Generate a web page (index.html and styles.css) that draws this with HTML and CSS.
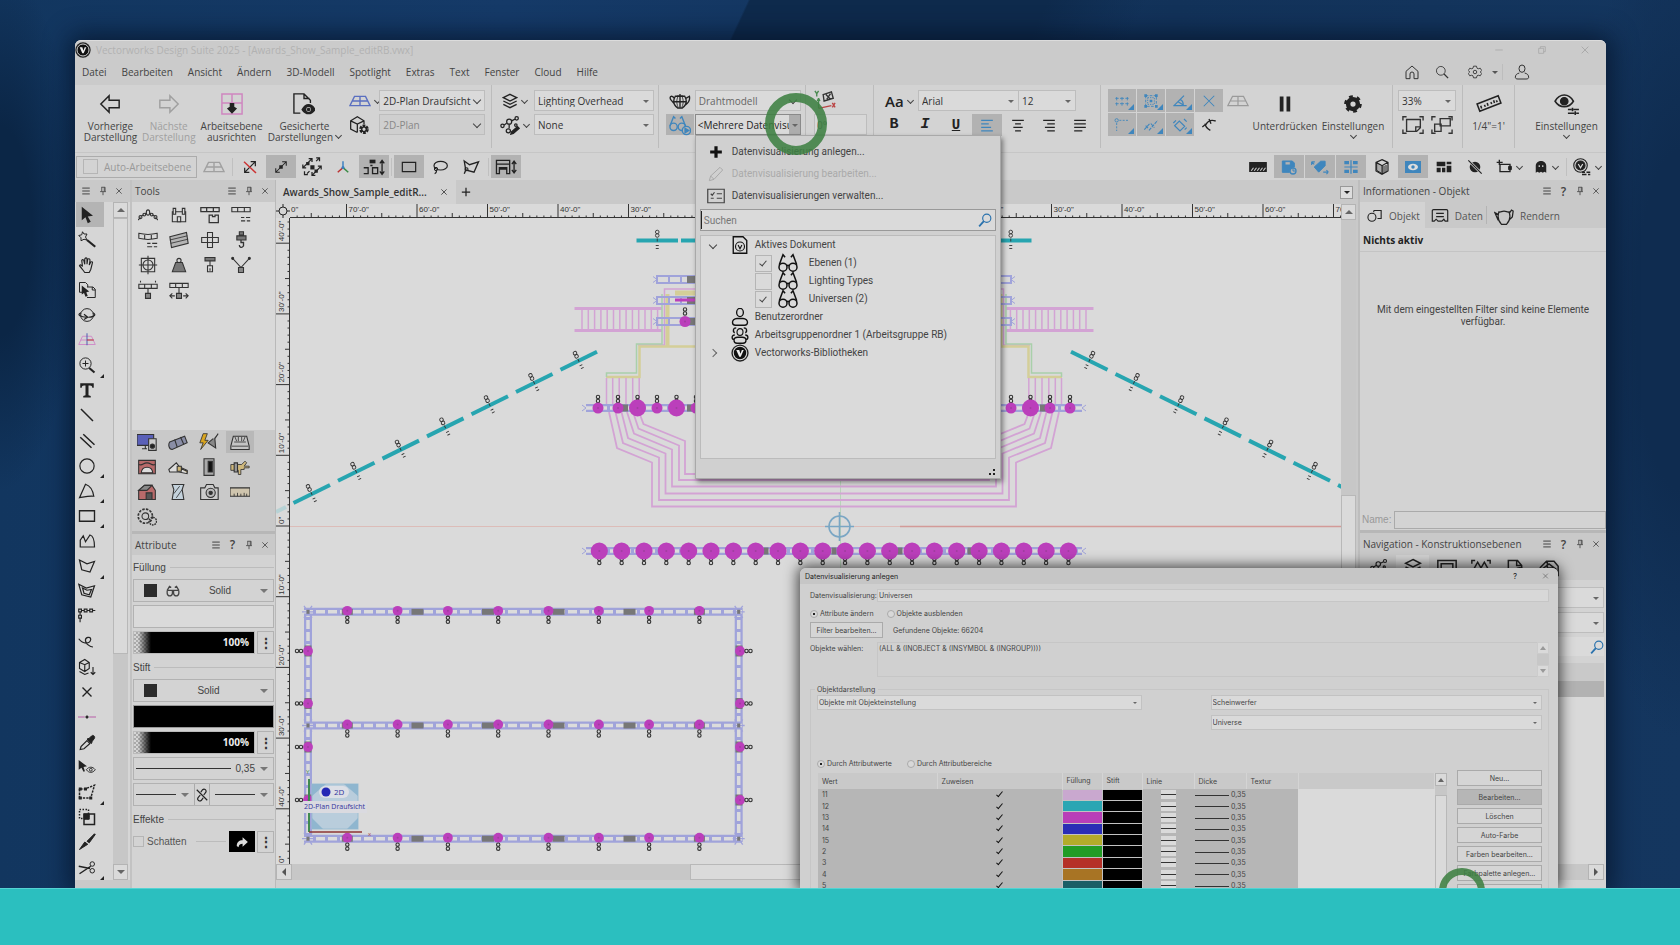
FILE: index.html
```html
<!DOCTYPE html>
<html lang="de">
<head>
<meta charset="utf-8">
<title>Vectorworks Design Suite 2025</title>
<link rel="stylesheet" href="styles.css">
</head>
<body>
<svg class="defs" aria-hidden="true">
<symbol id="logo" viewBox="0 0 24 24"><circle cx="12" cy="12" r="11.5" fill="#222" stroke="none"/><circle cx="12" cy="12" r="9" fill="#111" stroke="#ddd" stroke-width="1.4"/><path d="M7 8h4l1.6 5L14.500 8H17l-4 9h-2z" fill="#eee" stroke="none"/></symbol>
<symbol id="menu" viewBox="0 0 24 24"><path d="M3 5h18M3 12h18M3 19h18" stroke-width="2.400"/></symbol>
<symbol id="pin" viewBox="0 0 24 24"><path d="M8 3h9M9 3v10M15 3v10M17 3v10M5 13.500h14M12 14v8" stroke-width="2"/></symbol>
<symbol id="x" viewBox="0 0 24 24"><path d="M4 4l16 16M20 4L4 20" stroke-width="2.400"/></symbol>
<symbol id="min" viewBox="0 0 24 24"><path d="M3 12h18"/></symbol>
<symbol id="restore" viewBox="0 0 24 24"><path d="M4 8h12v12H4zM8 8V4h12v12h-4"/></symbol>
<symbol id="home" viewBox="0 0 24 24"><path d="M3 11L12 3l9 8v11h-6v-7a3 3 0 0 0-6 0v7H3z"/></symbol>
<symbol id="search" viewBox="0 0 24 24"><circle cx="10" cy="10" r="7.500"/><path d="M15.500 15.500l7 7" stroke-width="2.200"/></symbol>
<symbol id="find" viewBox="0 0 24 24"><circle cx="15" cy="9" r="7"/><path d="M10 14l-8 9" stroke-width="3"/></symbol>
<symbol id="gearline" viewBox="0 0 24 24"><path d="M9.500 2h5l1 3.500 2 1 3.500-1 2.500 4-2.500 2.500 2.500 2.500-2.500 4-3.500-1-2 1-1 3.500h-5l-1-3.500-2-1-3.500 1-2.500-4L3 12 .500 9.500 3 5.500l3.500 1 2-1z"/><circle cx="12" cy="12" r="3"/></symbol>
<symbol id="user" viewBox="0 0 24 24"><ellipse cx="12" cy="7" rx="4.500" ry="5.500"/><path d="M8 13.500c-4 1-6 3-6 6.500 0 2 2 2.500 4 2.500h12c2 0 4-.500 4-2.500 0-3.500-2-5.500-6-6.500"/></symbol>
<symbol id="left" viewBox="0 0 24 24"><path d="M2 12L11 3v5h11v8H11v5z" stroke-width="1.600"/></symbol>
<symbol id="right" viewBox="0 0 24 24"><path d="M22 12L13 3v5H2v8h11v5z" stroke-width="1.600"/></symbol>
<symbol id="align" viewBox="0 0 24 24"><path d="M1 1h22v22H1zM12 1v10M1 11h22" stroke="#cf86c0" stroke-width="1.600"/><path d="M9.500 11h5v4l3 2-5.500 5.500L6.500 17l3-2z" fill="#222" stroke="none"/></symbol>
<symbol id="saved" viewBox="0 0 24 24"><path d="M8 22H1V1h11l7 7v3M12 1v5h6" /><path d="M10 18c4-7 10-7 14 0-4 6-10 6-14 0z" fill="#222"/><circle cx="17" cy="18" r="2.600" fill="#ccc" stroke="none"/><circle cx="17" cy="18" r="1.200" fill="#222"/></symbol>
<symbol id="plane" viewBox="0 0 24 24"><path d="M6 7h12l5 10H1zM3.500 12h17M12 7v10"/></symbol>
<symbol id="planepink" viewBox="0 0 24 24"><path d="M6 7h12l5 11H1zM3.500 12h17" stroke="#d08cc8"/><path d="M12 3v16" stroke="#4a5ab0"/><path d="M12 12h9" stroke="#b33"/></symbol>
<symbol id="boxgear" viewBox="0 0 24 24"><path d="M10 21L2 17V7l8-5 8 5v4M2 7l8 4 8-4M10 11v10"/><circle cx="18" cy="17" r="4" stroke-width="3.500" stroke-dasharray="3 1.200"/><circle cx="18" cy="17" r="2.800" /></symbol>
<symbol id="layers" viewBox="0 0 24 24"><path d="M12 2l10 5-10 5L2 7zM2 12l10 5 10-5M2 17l10 5 10-5" stroke-width="2"/></symbol>
<symbol id="classes" viewBox="0 0 24 24"><circle cx="3" cy="13" r="2"/><circle cx="11" cy="8" r="3"/><circle cx="20" cy="4" r="2"/><circle cx="10" cy="19" r="2.500"/><circle cx="19" cy="12" r="1.500"/><path d="M5 12l3-2M14 7l4-2M11 11v5"/><path d="M14 20l7-6 2 2-7 6-3 1z" fill="#222"/></symbol>
<symbol id="teapot" viewBox="0 0 28 24"><path d="M8 6c-4 7-1 12 3 15h6c4-3 7-8 3-15zM7 9C4 4 0 6 2 10l5 6M21 9l5-3c1 5-2 9-5 11M10 5.500h8M14 3v18M7 13h14" stroke-width="1.700"/><path d="M11 7c-2 5-1 10 1 14M17 7c2 5 1 10-1 14" stroke-width="1"/></symbol>
<symbol id="pot" viewBox="0 0 24 24"><path d="M6 7c-3 8 1 13 3 15h6c2-2 6-7 3-15-2 1-3-1-6-1S8 8 6 7zM5 10L1 8l4 9M18 9l3-4 2 1-1 7-3 3"/></symbol>
<symbol id="glassplay" viewBox="0 0 24 24"><circle cx="5" cy="14" r="4"/><circle cx="14" cy="14" r="4"/><path d="M1 13L5 3l2 2M18 13L14 3l-2 2"/><circle cx="19" cy="18" r="4.500" fill="#b3b3b3"/><path d="M17.500 15.500l4 2.500-4 2.500z" fill="currentColor"/></symbol>
<symbol id="glass" viewBox="0 0 24 24"><circle cx="6" cy="17" r="4.800" stroke-width="1.800"/><circle cx="18" cy="17" r="4.800" stroke-width="1.800"/><path d="M10.500 15.500c1-1 2-1 3 0M1.500 14L6 2l2.500 3M22.500 14L18 2l-2.500 3" stroke-width="1.800"/></symbol>
<symbol id="glasssm" viewBox="0 0 24 24"><path d="M2 11h20M2 11l4-7 3 2M22 11l-4-7-3 2M2 11v5c1 6 8 6 9 0v-4M13 12v4c1 6 8 6 9 0v-5" stroke-width="2.200"/></symbol>
<symbol id="axes" viewBox="0 0 24 24"><path d="M5 10v10M5 9l-1.500 3M5 9l1.500 3" stroke="#4a8a50"/><path d="M5 20l14-3" stroke="#b44"/><path d="M10 5l9-3 2 7-10 3zM13 5l5 5M18 4l-4 6" stroke="#333"/><path d="M1 1l2 3 2-3M3 4v3" stroke="#4a8a50"/><path d="M20 14l3 5M23 14l-3 5" stroke="#b44"/></symbol>
<symbol id="pause" viewBox="0 0 24 24"><path d="M5 2h5v20H5zM14 2h5v20h-5z" fill="#222" stroke="none"/></symbol>
<symbol id="gear" viewBox="0 0 24 24"><circle cx="12" cy="12" r="6.500" stroke="#222" stroke-width="6"/><circle cx="12" cy="12" r="10" stroke="#222" stroke-width="3.500" stroke-dasharray="5 5.400"/></symbol>
<symbol id="fit" viewBox="0 0 24 24"><path d="M1 7V3h4M19 3h4v4M1 17v4h4M19 21h4v-4" /><path d="M5 6h15v9l-4 4H5zM20 14h-5v5"/></symbol>
<symbol id="fit2" viewBox="0 0 24 24"><path d="M1 7V3h4M19 3h4v4M1 17v4h4M19 21h4v-4"/><path d="M10 5h11v8H10zM4 11h7v8H4z"/></symbol>
<symbol id="ruler" viewBox="0 0 28 24"><path d="M1 12L24 3l3 8L4 20zM6 17l-1-3M10 15l-1-2M13 14l-1-3M17 12l-1-2M20 11l-1-3M23 10l-1-2" stroke-width="1.700"/></symbol>
<symbol id="eyeset" viewBox="0 0 28 24"><path d="M1 9c5-9 15-9 20 0-5 8-15 8-20 0z" stroke-width="1.700"/><circle cx="11" cy="9" r="4" fill="#222"/><path d="M15 18h4M21 18h6M15 22h7M24 22h3M20 16v4M23 20v4" stroke-width="1.700"/></symbol>
<symbol id="grid" viewBox="0 0 24 24"><path d="M4 6v5M2 8h5M12 6v5M9 8h6M20 6v5M17 8h5M4 14v5M2 16h5M12 14v5M9 16h6M20 14v5M17 16h5"/></symbol>
<symbol id="snapobj" viewBox="0 0 24 24"><path d="M4 4h16v16H4z" stroke-dasharray="4 2"/><path d="M7 7h10v10H7z" stroke-dasharray="2 1.500"/><path d="M2 2h4v4H2zM18 2h4v4h-4zM2 18h4v4H2zM18 18h4v4h-4zM10 10h4v4h-4z" fill="currentColor" stroke="none"/></symbol>
<symbol id="angle" viewBox="0 0 24 24"><path d="M2 19h20M3 19L18 4M12 10c4 1 5 5 5 9M9 13l8 5" stroke-width="1.800"/></symbol>
<symbol id="cross" viewBox="0 0 24 24"><path d="M3 3l18 18M21 3L3 21" stroke-width="1.800"/></symbol>
<symbol id="snappt" viewBox="0 0 24 24"><circle cx="4" cy="5" r="2.500"/><path d="M8 5h14M4 9v12" stroke-dasharray="3 2"/></symbol>
<symbol id="slashes" viewBox="0 0 24 24"><path d="M2 19L11 9M9 20L22 5M4 13l4 4M12 10l5 6" stroke-width="1.600" stroke-dasharray="5 1.500"/></symbol>
<symbol id="rot" viewBox="0 0 24 24"><path d="M4 13l7-7 8 8-7 7zM2 9l4-4M18 3l4 4M19 19l3-3" stroke-width="1.800"/></symbol>
<symbol id="arc" viewBox="0 0 24 24"><path d="M2 15l5-4M7 12c3-6 9-8 15-6M6 10c1 6 4 8 8 10M12 3l3 7" stroke-width="2"/></symbol>
<symbol id="al" viewBox="0 0 24 24"><path d="M2 4h20M2 10h13M2 16h17M2 22h20" stroke-width="2.400"/></symbol>
<symbol id="ac" viewBox="0 0 24 24"><path d="M2 4h20M7 10h10M4 16h16M7 22h10" stroke-width="2.400"/></symbol>
<symbol id="ar" viewBox="0 0 24 24"><path d="M2 4h20M9 10h13M5 16h17M9 22h13" stroke-width="2.400"/></symbol>
<symbol id="aj" viewBox="0 0 24 24"><path d="M2 4h20M2 10h20M2 16h20M2 22h14" stroke-width="2.400"/></symbol>
<symbol id="noscale" viewBox="0 0 24 24"><path d="M4 20L20 4M13 4h7v7M4 13v7h7" stroke="#222" stroke-width="1.800"/><path d="M3 4l18 17" stroke="#c33" stroke-width="2.200"/></symbol>
<symbol id="scale1" viewBox="0 0 24 24"><path d="M3 21L21 3M14 3h7v7M3 14v7h7" stroke-width="1.800"/><path d="M9 9h6v6H9z" fill="#222" stroke="none"/></symbol>
<symbol id="scale2" viewBox="0 0 24 24"><path d="M1 13L12 2M8 2h4v4M1 9v4h4M12 22L23 11M19 11h4v4M12 18v4h4M6 20l3-3M17 5l3-3M3 17v4h4M17 1h4v4" stroke-width="1.500"/><path d="M5 6h4v4H5zM15 15h4v4h-4zM10 10h5v5h-5z" fill="#222" stroke="none"/></symbol>
<symbol id="tri" viewBox="0 0 24 24"><path d="M12 13V2" stroke="#3a7fc0" stroke-width="2.500"/><path d="M12 13L3 21" stroke="#b33" stroke-width="2.500"/><path d="M12 13l9 8" stroke="#3a8a45" stroke-width="2.500"/><circle cx="12" cy="13" r="2.600" fill="#3a7fc0" stroke="none"/></symbol>
<symbol id="conn" viewBox="0 0 30 24"><path d="M9 2h8v5H9z" fill="#222" stroke="none"/><path d="M1 13h6v8H1M13 13h7v8h-7zM26 4v18M23 7l3-4 3 4M23 18l3 4 3-4M10 10h3" stroke-width="1.800"/></symbol>
<symbol id="rect" viewBox="0 0 24 24"><path d="M2 5h20v14H2z" stroke-width="1.800"/></symbol>
<symbol id="lasso" viewBox="0 0 24 24"><ellipse cx="13" cy="10" rx="10" ry="6.500" stroke-width="1.800"/><circle cx="6" cy="15" r="2.500"/><path d="M7 17c0 3-1 4-3 5" stroke-width="1.800"/></symbol>
<symbol id="poly" viewBox="0 0 24 24"><path d="M3 4l7 5 12-4-6 14-11-3zM5 16l-2 5" stroke-width="1.800"/><circle cx="6" cy="15" r="2"/></symbol>
<symbol id="table" viewBox="0 0 30 24"><path d="M2 3h18v5H2zM2 8v13h4v-8h10v8h4V8M6 15h10M26 5v14M23 8l3-4 3 4M23 16l3 4 3-4" stroke-width="1.800"/></symbol>
<symbol id="hatch" viewBox="0 0 24 24"><path d="M1 6h22v12H1z" fill="#222"/><path d="M3 17l3-4M7 17l3-4M11 17l3-4M15 17l3-4M19 17l3-4" stroke="#ccc" stroke-width="1.500"/></symbol>
<symbol id="disk" viewBox="0 0 24 24"><path d="M2 3h15l3 3v6a7 7 0 0 0-7 8H2z" fill="currentColor"/><path d="M6 4h8v5H6z" fill="#b3b3b3"/><circle cx="18" cy="18" r="4.500" fill="#b3b3b3" stroke-width="2"/><path d="M18 15v3h3"/></symbol>
<symbol id="tag" viewBox="0 0 28 24"><path d="M5 12L15 3h7v7L12 20z" fill="currentColor"/><path d="M1 4l4 4M1 4h5M1 4v5M27 20h-8M27 20l-3-3M27 20l-3 3" stroke-width="1.800"/></symbol>
<symbol id="split" viewBox="0 0 24 24"><path d="M2 3h7v5H2zM15 3h7v5h-7zM2 16h7v5H2zM15 16h7v5h-7z" fill="currentColor" stroke="none"/><path d="M12 2v20M2 12h20" stroke-width="1.800"/></symbol>
<symbol id="cube" viewBox="0 0 24 24"><path d="M12 1l9 4v13l-9 5-9-5V5zM3 5l9 5 9-5M12 10v13" stroke-width="1.800"/><path d="M4 6l8 4v12l-8-5z" fill="#aaa"/><path d="M15 10v11M18 9v11"/></symbol>
<symbol id="eyebox" viewBox="0 0 24 24"><path d="M0 3h24v18H0z" fill="currentColor" stroke="none"/><ellipse cx="12" cy="12" rx="7.500" ry="5" fill="#ddd" stroke="none"/><circle cx="12" cy="12" r="2.600" fill="currentColor" stroke="none"/></symbol>
<symbol id="blocks" viewBox="0 0 24 24"><path d="M1 4h13v7H1zM16 4h7v4h-7zM16 10h7v10h-7zM1 13h6v7H1zM9 13h5v7H9z" fill="#222" stroke="none"/></symbol>
<symbol id="dotslash" viewBox="0 0 24 24"><circle cx="12" cy="12" r="8" fill="#222" stroke="none"/><path d="M2 2l20 20" stroke="#d3d3d3" stroke-width="4"/><path d="M2 2l20 20" stroke-width="1.800"/></symbol>
<symbol id="crop" viewBox="0 0 24 24"><path d="M6 8h15v11H6zM1 5h9M5 1v8" stroke-width="2"/><path d="M19 11h4v5h-4z" fill="#222"/></symbol>
<symbol id="ghost" viewBox="0 0 24 24"><path d="M3 22V10c0-11 18-11 18 0v12l-3-2-3 2-3-2-3 2-3-2z" fill="#222" stroke="none"/><path d="M8 9h2v3H8zM14 9h2v3h-2z" fill="#ddd" stroke="none"/></symbol>
<symbol id="vset" viewBox="0 0 24 24"><circle cx="10" cy="10" r="9" stroke-width="1.500"/><circle cx="10" cy="10" r="6" fill="#222"/><path d="M7 8l3 5 3-5" stroke="#ddd" stroke-width="1.600"/><path d="M12 19h4M18 19h5M12 22h6M20 22h3" stroke-width="2"/></symbol>
<symbol id="plus" viewBox="0 0 24 24"><path d="M12 2v20M2 12h20" stroke="#111" stroke-width="5.500"/></symbol>
<symbol id="plusthin" viewBox="0 0 24 24"><path d="M12 2v20M2 12h20" stroke-width="3"/></symbol>
<symbol id="pencil" viewBox="0 0 24 24"><path d="M2 22l2-7L18 2l4 4L9 20zM4 15l5 5"/></symbol>
<symbol id="list" viewBox="0 0 24 24"><path d="M1 3h22v18H1z" stroke-width="1.600"/><path d="M5 9l2 2 3-4M13 9h7M5 15h4M13 15h7" stroke-width="1.600"/></symbol>
<symbol id="doc" viewBox="0 0 24 24"><path d="M3 1h13l5 5v17H3z" stroke-width="1.800"/><circle cx="12" cy="14" r="6"/><path d="M9.500 12l2.500 5 2.500-5" stroke-width="1.500"/></symbol>
<symbol id="person" viewBox="0 0 24 24"><ellipse cx="12" cy="6" rx="4.500" ry="5.500" stroke-width="1.800"/><path d="M8 14h8c4 0 6 3 6 5 0 3-1 4-4 4H6c-3 0-4-1-4-4 0-2 2-5 6-5z" stroke-width="1.800"/></symbol>
<symbol id="people" viewBox="0 0 24 24"><ellipse cx="12" cy="8" rx="4" ry="4.500"/><path d="M9 15h6c4 0 5 2 5 4 0 3-1 4-4 4H8c-3 0-4-1-4-4 0-2 1-4 5-4zM5 12C0 12 1 18 4 18M19 12c5 0 4 6 1 6M7 3C3 1 2 8 5 9M17 3c4-2 5 5 2 6" stroke-width="1.800"/></symbol>
<symbol id="obj" viewBox="0 0 26 24"><circle cx="8" cy="14" r="6.500" stroke-width="1.800"/><path d="M11 3h12v13h-6M11 3v3" stroke-width="1.800"/></symbol>
<symbol id="data" viewBox="0 0 28 24"><path d="M2 20V4c0-1 1-2 2-2h20c1 0 2 1 2 2v16h-4l-2-3-3 3h-6l-3-3-3 3zM8 8h12M8 13h12" stroke-width="1.800"/></symbol>
<!-- tool palette -->
<symbol id="arrow" viewBox="0 0 24 24"><path d="M5 1v18l5-4 3 8 4-2-4-7 7-1z" fill="#222" stroke="none"/></symbol>
<symbol id="wand" viewBox="0 0 24 24"><path d="M6 1l2 3 4 0-2 4 2 4-4-1-4 2 0-4-3-3 4-1z"/><path d="M12 12l11 9" stroke-width="3"/></symbol>
<symbol id="hand" viewBox="0 0 24 24"><path d="M9 22c-3-4-5-7-7-9 1-2 3-1 4 1L5 6c1-2 3-1 3 1l1 4V4c1-2 3-2 3 0v7l1-7c2-1 3 0 3 2l-1 6 2-4c2-1 3 0 2 2l-2 8-2 4z" stroke-width="1.500"/></symbol>
<symbol id="copysel" viewBox="0 0 24 24"><path d="M11 15H2V2h8l3 3v3M12 8h8l3 3v11H12M19 8v4h4"/><path d="M5 6v12l3-2 2 5 3-1-2-5 4-1z" fill="#222" stroke="none"/></symbol>
<symbol id="orbit" viewBox="0 0 24 24"><circle cx="12" cy="12" r="8.500"/><path d="M4 9c-7 3 1 6 7 6M20 9c7 4-3 6-6 6M8 11l5 4-5 3" stroke-width="1.600"/></symbol>
<symbol id="zoomt" viewBox="0 0 24 24"><circle cx="10" cy="10" r="7.500"/><path d="M10 6v8M6 10h8"/><path d="M15 16l7 6" stroke-width="2.800"/></symbol>
<symbol id="txt" viewBox="0 0 24 24"><path d="M3 3h18v6h-2c0-2-1-3-3-3h-2v13l3 1v2H7v-2l3-1V6H8C6 6 5 7 5 9H3z" fill="#222" stroke="none"/></symbol>
<symbol id="ln" viewBox="0 0 24 24"><path d="M4 4l16 16" stroke-width="2"/></symbol>
<symbol id="dln" viewBox="0 0 24 24"><path d="M3 7l15 14M7 3l15 14" stroke-width="2"/></symbol>
<symbol id="circ" viewBox="0 0 24 24"><circle cx="12" cy="12" r="9.500" stroke-width="1.600"/></symbol>
<symbol id="sector" viewBox="0 0 24 24"><path d="M2 21L10 3c6 2 10 9 11 16-6-1-13 1-19 2z" stroke-width="1.600"/></symbol>
<symbol id="polyg" viewBox="0 0 24 24"><path d="M3 20V11l4-6 3 8 6-9c4 1 6 6 6 16z" stroke-width="1.600"/></symbol>
<symbol id="poly2" viewBox="0 0 24 24"><path d="M2 4l10 5 10-3-6 14-11-3z" stroke-width="1.600"/></symbol>
<symbol id="poly3" viewBox="0 0 24 24"><path d="M1 3l10 5 11-3-5 15-12-3zM6 8l6 3 6-1-3 7-7-2z" stroke-width="1.600"/></symbol>
<symbol id="path" viewBox="0 0 26 24"><path d="M1 2h4v4H1zM9 2h4v4H9zM17 2h4v4h-4zM1 11h4v4H1zM3 6v5M5 4h4M13 4h4M21 4h4M3 15v6" stroke-width="1.600"/></symbol>
<symbol id="squig" viewBox="0 0 24 24"><path d="M1 9c6 8 15 7 16 1 0-5-8-3-7 2 1 4 6 8 10 8" stroke-width="1.600"/></symbol>
<symbol id="cubed" viewBox="0 0 24 24"><path d="M2 6l7-4 6 4v8l-6 4-7-4zM2 6l7 3 6-3M9 9v9M2 18l7 4 5-2M20 12v10M17 19l3 3 3-3" stroke-width="1.500"/></symbol>
<symbol id="sx" viewBox="0 0 24 24"><path d="M6 6l12 12M18 6L6 18" stroke-width="1.800"/></symbol>
<symbol id="dash" viewBox="0 0 24 24"><path d="M0 12h9M15 12h9" stroke="#b85fa8" stroke-width="1.500"/><circle cx="12" cy="12" r="1.500" fill="#222"/></symbol>
<symbol id="dropper" viewBox="0 0 24 24"><path d="M3 22l1-4 8-8 4 4-8 7z" stroke-width="1.600"/><path d="M12 8l6 6 1-3 3-4c1-3-2-5-4-3l-3 3z" fill="#222"/></symbol>
<symbol id="arroweye" viewBox="0 0 26 24"><path d="M1 2v14l4-3 3 6 2-1-2-6 5-1z" fill="#222" stroke="none"/><path d="M12 16c4-5 9-5 13 0-4 5-9 5-13 0z"/><circle cx="18.500" cy="16" r="2"/></symbol>
<symbol id="reshape" viewBox="0 0 24 24"><path d="M2 20h15l5-17L9 8H2zM2 8v12" stroke-dasharray="3 1.500" stroke-width="2"/><path d="M1 6h4v4H1zM8 6h4v4H8zM1 18h4v4H1zM15 18h4v4h-4z" fill="#222" stroke="none"/></symbol>
<symbol id="clipt" viewBox="0 0 24 24"><path d="M2 2h12v12H2z" stroke-dasharray="2 2" stroke-width="2"/><path d="M8 8h14v14H8z" stroke-width="2"/><path d="M8 8h7v7H8z" fill="#222"/></symbol>
<symbol id="knife" viewBox="0 0 24 24"><path d="M2 22l7-10 4 3zM12 11L22 1l1 1-8 11z" fill="#222"/></symbol>
<symbol id="sciss" viewBox="0 0 24 24"><path d="M1 11l15 3M2 21l15-10" stroke-width="2"/><circle cx="19" cy="8" r="3"/><circle cx="19" cy="17" r="3"/></symbol>
<!-- spotlight tools -->
<symbol id="t1" viewBox="0 0 24 24"><path d="M0 18l3-3M24 18l-3-3M4 13l3-1M8.500 10.500l1.500-1M15.500 10.500L14 9.500M20 13l-3-1"/><ellipse cx="12" cy="9" rx="2" ry="3.200"/><circle cx="3" cy="14.500" r="1.800"/><circle cx="7.500" cy="11.500" r="1.600"/><circle cx="16.500" cy="11.500" r="1.600"/><circle cx="21" cy="14.500" r="1.800"/></symbol>
<symbol id="t2" viewBox="0 0 24 24"><path d="M4 8h16v12H4z"/><path d="M5 4h3v7H5zM16 4h3v7h-3zM10 14h4v6h-4z" fill="#d9d9d9"/></symbol>
<symbol id="t3" viewBox="0 0 24 24"><path d="M1 3h22v5H1zM8 3v5M16 3v5M11 12h4v2h3v-2h4v9H11z" stroke-width="1.500"/></symbol>
<symbol id="t4" viewBox="0 0 24 24"><path d="M1 3h22v5H1zM8 3v5M16 3v5M12 15h4M18 15h5M12 19h5M19 19h4"/></symbol>
<symbol id="t5" viewBox="0 0 24 24"><path d="M1 4c8 2 14 2 22 0v6c-8 2-14 2-22 0zM8 5v6M16 5v6M11 16h4M17 16h6M11 20h6M19 20h4"/></symbol>
<symbol id="t6" viewBox="0 0 24 24"><path d="M1 8l20-5 2 13-20 5z" fill="#b4b4b4"/><path d="M1 12l21-5M2 16l21-5" stroke-width="1"/></symbol>
<symbol id="t7" viewBox="0 0 24 24"><path d="M9 3h6v6h7v6h-7v6H9v-6H2V9h7zM9 9h6v6H9z"/></symbol>
<symbol id="t8" viewBox="0 0 24 24"><path d="M10 2h5v4h-5zM7 7h11v5H7z" fill="#777"/><path d="M12 12v3h3v4c-2 3-5 2-5-1" stroke-width="1.600"/></symbol>
<symbol id="t9" viewBox="0 0 24 24"><path d="M4 4h16v16H4zM12 1v22M1 12h22"/><circle cx="12" cy="12" r="6"/></symbol>
<symbol id="t10" viewBox="0 0 24 24"><path d="M8 9h8l4 11H4z" fill="#777"/><circle cx="12" cy="6.500" r="2.500"/></symbol>
<symbol id="t11" viewBox="0 0 24 24"><path d="M6 3h12v4H6z" fill="#777"/><path d="M12 7v6M9 13h6v7H9zM12 16v3"/></symbol>
<symbol id="t12" viewBox="0 0 24 24"><path d="M2 4l10 11L22 4"/><circle cx="2" cy="4" r="1.200" fill="#222"/><circle cx="22" cy="4" r="1.200" fill="#222"/><path d="M9 15h6v6H9z" fill="#888"/></symbol>
<symbol id="t13" viewBox="0 0 24 24"><path d="M1 5h22v5H1zM8 5v5M16 5v5M12 10v6M3 1v2M21 1v2"/><path d="M9 16h6v6H9z" fill="#888"/></symbol>
<symbol id="t14" viewBox="0 0 24 24"><path d="M1 4h22v5H1zM8 4v5M16 4v5M12 9v7M1 19h6M17 19h6M4 16l-3 3 3 3M20 16l3 3-3 3"/><path d="M9 16h6v6H9z" fill="#888"/></symbol>
<!-- tool sets -->
<symbol id="s1" viewBox="0 0 24 24"><path d="M0 3h20v13H0z" fill="#5a60b8"/><path d="M6 20h6M10 16v4"/><path d="M14 8h9v14h-9z" fill="#ccc"/><circle cx="18.500" cy="17" r="2.500" fill="#222"/></symbol>
<symbol id="s2" viewBox="0 0 24 24"><path d="M2 12l18-7 3 8-18 8c-4 0-5-6-3-9z" fill="#8a8ea6"/><path d="M8 9l3 9M15 6l4 9"/></symbol>
<symbol id="s3" viewBox="0 0 24 24"><path d="M5 2L1 13h4l-3 8 9-11H7l3-8z" fill="#d9a520" stroke-width="1"/><path d="M23 2l-4 6 1 11-9-6 6-5" fill="#888"/></symbol>
<symbol id="s4" viewBox="0 0 24 24"><path d="M4 5h16l3 12v4H1v-4z" fill="#c4c4c4"/><path d="M2 17h20M6 6l2 5M10 6v5M14 6v5M18 6l-2 5M5 12h14" stroke-width="1"/></symbol>
<symbol id="s5" viewBox="0 0 24 24"><path d="M2 4h20v16H2z" fill="#b86a6a"/><path d="M5 19c1-9 13-9 14 0z" fill="#ddd"/><path d="M2 9c5 2 5-2 10-2s5 4 10 2" /></symbol>
<symbol id="s6" viewBox="0 0 24 24"><path d="M1 15l9-8 4 5 9 4v4l-10-2H2z" fill="#ddd"/><path d="M11 11h5v6h-5zM16 14l7 3v2" fill="#d0b878"/></symbol>
<symbol id="s7" viewBox="0 0 24 24"><path d="M6 2h12v20H6z" fill="#aaa"/><path d="M11 5h5v13h-5z" fill="#111"/></symbol>
<symbol id="s8" viewBox="0 0 24 24"><path d="M1 9h13l4-4 2 2-3 4h6v2h-6v2h-4v6h-3v-5H1z" fill="#cfb87c" stroke-width="1"/><path d="M5 7h4v11H5z" fill="#999"/></symbol>
<symbol id="s9" viewBox="0 0 24 24"><path d="M2 10l7-6h9l4 6v11H2z" fill="#b86a6a"/><path d="M2 10l7-6h9l-6 6z" fill="#888"/><path d="M11 13h7v8h-7z" fill="#555"/></symbol>
<symbol id="s10" viewBox="0 0 24 24"><path d="M5 3h14l-2 6 2 12H5l2-12z" fill="#c4d2dc"/><path d="M7 14l7-9M10 19l7-10" stroke-width="1"/></symbol>
<symbol id="s11" viewBox="0 0 24 24"><path d="M2 7h5l2-4h8l2 4h4v14H2z" fill="#ccc"/><circle cx="14" cy="13" r="5.500" fill="#bbb"/><circle cx="14" cy="13" r="2" fill="#333"/></symbol>
<symbol id="s12" viewBox="0 0 24 24"><path d="M0 7h24v10H0z" fill="#cfc5ae"/><path d="M5 17v-3M9 17v-4M13 17v-3M17 17v-4M20 17v-3" stroke-width="1"/></symbol>
<symbol id="s13" viewBox="0 0 24 24"><circle cx="10" cy="11" r="8.500" stroke-dasharray="3 1.500" stroke-width="2"/><circle cx="10" cy="11" r="4"/><circle cx="19" cy="17" r="4.500" stroke-dasharray="2 1" stroke-width="1.800"/></symbol>
<!-- navigation tabs -->
<symbol id="n3" viewBox="0 0 24 24"><path d="M1 3h22v20H1zM5 7h14v16H5z" stroke-width="1.800"/></symbol>
<symbol id="n4" viewBox="0 0 24 24"><path d="M1 7V3h4M19 3h4v4M3 14l5-9 4 7 4-7 5 9" stroke-width="1.800"/></symbol>
<symbol id="n5" viewBox="0 0 24 24"><path d="M4 23V3h11l5 6v4M14 3v6h6M12 14c4-3 8-3 11 0" stroke-width="1.800"/></symbol>
<symbol id="n6" viewBox="0 0 24 24"><path d="M1 12L9 4h9l5 6v12M10 4v8h8M3 14l9-7 9 7" stroke-width="1.800"/></symbol>
<symbol id="unlink" viewBox="0 0 24 24"><path d="M3 3l18 18M10 7l3-4c3-3 8 1 5 5l-3 4M9 12l-4 5c-2 4 3 7 6 4l3-4" stroke-width="2"/></symbol>
<symbol id="redo" viewBox="0 0 24 24"><path d="M3 19c0-7 4-10 10-10V4l9 8-9 8v-5c-4 0-6 1-7 6z" fill="#ddd" stroke="none"/></symbol>
</svg>

<main class="stage">
<div class="window">
  <header class="titlebar">
    <svg class="ic s16"><use href="#logo"/></svg>
    <span class="title">Vectorworks Design Suite 2025 - [Awards_Show_Sample_editRB.vwx]</span>
    <span class="winbtns">
      <button aria-label="Minimieren"><svg class="ic s10"><use href="#min"/></svg></button>
      <button aria-label="Verkleinern"><svg class="ic s10"><use href="#restore"/></svg></button>
      <button aria-label="Schließen"><svg class="ic s10"><use href="#x"/></svg></button>
    </span>
  </header>
  <nav class="menubar">
    <button>Datei</button><button>Bearbeiten</button><button>Ansicht</button><button>Ändern</button><button>3D-Modell</button><button>Spotlight</button><button>Extras</button><button>Text</button><button>Fenster</button><button>Cloud</button><button>Hilfe</button>
    <span class="menuicons">
      <button aria-label="Home"><svg class="ic s16"><use href="#home"/></svg></button>
      <button aria-label="Suche"><svg class="ic s14"><use href="#search"/></svg></button>
      <button aria-label="Optionen" class="opt"><svg class="ic s14"><use href="#gearline"/></svg><i class="caret"></i></button>
      <button aria-label="Konto" class="acct"><svg class="ic s16"><use href="#user"/></svg></button>
    </span>
  </nav>

  <section class="ribbon" aria-label="Darstellungszeile">
    <div class="grp g1">
      <button class="big"><svg class="ic s22"><use href="#left"/></svg><span>Vorherige<br>Darstellung</span></button>
      <button class="big off"><svg class="ic s22"><use href="#right"/></svg><span>Nächste<br>Darstellung</span></button>
      <button class="big"><svg class="ic s22"><use href="#align"/></svg><span>Arbeitsebene<br>ausrichten</span></button>
      <button class="big"><svg class="ic s22"><use href="#saved"/></svg><span>Gesicherte<br>Darstellungen<i class="chev in"></i></span></button>
      <div class="rows planes"><span class="pick blue"><svg class="ic s22"><use href="#plane"/></svg><i class="chev"></i></span><span class="pick"><svg class="ic s20"><use href="#boxgear"/></svg></span></div>
      <div class="rows">
        <label class="sel chevd"><select aria-label="Ansicht"><option>2D-Plan Draufsicht</option></select></label>
        <label class="sel chevd dis"><select aria-label="Projektion" disabled><option>2D-Plan</option></select></label>
      </div>
    </div>
    <div class="grp g2">
      <div class="rows"><span class="pick gap"><svg class="ic s16"><use href="#layers"/></svg><i class="chev"></i></span><span class="pick gap"><svg class="ic s20"><use href="#classes"/></svg><i class="chev"></i></span></div>
      <div class="rows">
        <label class="sel"><select aria-label="Ebene"><option>Lighting Overhead</option></select></label>
        <label class="sel"><select aria-label="Klasse"><option>None</option></select></label>
      </div>
    </div>
    <div class="grp g3">
      <div class="rows"><span class="pick mid"><svg class="ic s22"><use href="#teapot"/></svg></span><button class="pick mid on" aria-label="Datenvisualisierung"><svg class="ic s22"><use href="#glassplay"/></svg></button></div>
      <div class="rows">
        <label class="sel chevd soft"><select aria-label="Rendermodus"><option>Drahtmodell</option></select></label>
        <div class="anchor">
          <label class="sel open"><select aria-label="Datenvisualisierung wählen"><option>&lt;Mehrere Datenvisualisierungen&gt;</option></select></label>
          <div class="popup">
            <button class="pitem"><svg class="ic s14"><use href="#plus"/></svg>Datenvisualisierung anlegen...</button>
            <button class="pitem off"><svg class="ic s16"><use href="#pencil"/></svg>Datenvisualisierung bearbeiten...</button>
            <button class="pitem"><svg class="ic s18"><use href="#list"/></svg>Datenvisualisierungen verwalten...</button>
            <div class="psearch"><input type="text" placeholder="Suchen" aria-label="Suchen"><svg class="ic s14 blue2"><use href="#find"/></svg></div>
            <ul class="tree">
              <li><i class="chev dk"></i><svg class="ic s18"><use href="#doc"/></svg>Aktives Dokument</li>
              <li class="sub"><label><input type="checkbox" checked><svg class="ic s20"><use href="#glass"/></svg>Ebenen (1)</label></li>
              <li class="sub"><label><input type="checkbox"><svg class="ic s20"><use href="#glass"/></svg>Lighting Types</label></li>
              <li class="sub"><label><input type="checkbox" checked><svg class="ic s20"><use href="#glass"/></svg>Universen (2)</label></li>
              <li><i class="nochev"></i><svg class="ic s18"><use href="#person"/></svg>Benutzerordner</li>
              <li><i class="nochev"></i><svg class="ic s18"><use href="#people"/></svg>Arbeitsgruppenordner 1 (Arbeitsgruppe RB)</li>
              <li><i class="chev rt"></i><svg class="ic s18"><use href="#logo"/></svg>Vectorworks-Bibliotheken</li>
            </ul>
            <i class="grip"></i>
          </div>
          <i class="ring ring-a"></i>
        </div>
      </div>
    </div>
    <div class="grp g4"><div class="rows"><span class="pick"><svg class="ic s22"><use href="#axes"/></svg></span><input class="deg" type="text" value="0°" aria-label="Winkel"></div></div>
    <div class="grp g5">
      <div class="line"><span class="aa">Aa</span><i class="chev"></i>
        <label class="sel font"><select aria-label="Schrift"><option>Arial</option></select></label><label class="sel size"><select aria-label="Schriftgröße"><option>12</option></select></label></div>
      <div class="line fmt"><button class="b">B</button><button class="i">I</button><button class="u">U</button><button class="on" aria-label="Links"><svg class="ic s14"><use href="#al"/></svg></button><button aria-label="Mitte"><svg class="ic s14"><use href="#ac"/></svg></button><button aria-label="Rechts"><svg class="ic s14"><use href="#ar"/></svg></button><button aria-label="Blocksatz"><svg class="ic s14"><use href="#aj"/></svg></button></div>
    </div>
    <div class="grp g6">
      <div class="snaps">
        <button class="on c" aria-label="Raster"><svg class="ic s16"><use href="#grid"/></svg></button><button class="on c" aria-label="Objekt"><svg class="ic s16"><use href="#snapobj"/></svg></button><button class="on c" aria-label="Winkel"><svg class="ic s16"><use href="#angle"/></svg></button><button class="on" aria-label="Schnittpunkt"><svg class="ic s14"><use href="#cross"/></svg></button><button class="off" aria-label="Ebene"><svg class="ic s22"><use href="#plane"/></svg></button>
        <button class="on c" aria-label="Punkt"><svg class="ic s16"><use href="#snappt"/></svg></button><button class="on c" aria-label="Abstand"><svg class="ic s16"><use href="#slashes"/></svg></button><button class="on c" aria-label="Kante"><svg class="ic s16"><use href="#rot"/></svg></button><button aria-label="Tangente"><svg class="ic s16"><use href="#arc"/></svg></button>
      </div>
      <button class="big"><svg class="ic s18"><use href="#pause"/></svg><span>Unterdrücken</span></button>
      <button class="big"><svg class="ic s18"><use href="#gear"/></svg><span>Einstellungen</span><i class="chev"></i></button>
    </div>
    <div class="grp g7"><div class="rows"><label class="sel"><select aria-label="Zoom"><option>33%</option></select></label><span class="two"><svg class="ic s22"><use href="#fit"/></svg><svg class="ic s22"><use href="#fit2"/></svg></span></div></div>
    <div class="grp g8"><button class="big"><svg class="ic w28"><use href="#ruler"/></svg><span>1/4"=1'</span></button></div>
    <div class="grp g9"><button class="big"><svg class="ic w28"><use href="#eyeset"/></svg><span>Einstellungen</span><i class="chev"></i></button></div>
  </section>

  <section class="modebar" aria-label="Methodenzeile">
    <label class="auto"><input type="checkbox" disabled>Auto-Arbeitsebene</label>
    <button class="off"><svg class="ic s22"><use href="#plane"/></svg></button><i class="sep"></i>
    <button><svg class="ic s16"><use href="#noscale"/></svg></button><button class="on"><svg class="ic s14"><use href="#scale1"/></svg></button><button><svg class="ic s20"><use href="#scale2"/></svg></button><button><svg class="ic s14"><use href="#tri"/></svg></button><button class="on"><svg class="ic s22"><use href="#conn"/></svg></button><i class="sep"></i>
    <button class="on"><svg class="ic s16"><use href="#rect"/></svg></button><button><svg class="ic s16"><use href="#lasso"/></svg></button><button><svg class="ic s18"><use href="#poly"/></svg></button><i class="sep"></i>
    <button class="on"><svg class="ic s22"><use href="#table"/></svg></button>
    <span class="push"></span>
    <button><svg class="ic s18"><use href="#hatch"/></svg></button><button class="on"><svg class="ic s16"><use href="#disk"/></svg></button><button class="on"><svg class="ic s18"><use href="#tag"/></svg></button><button class="on"><svg class="ic s16"><use href="#split"/></svg></button><button><svg class="ic s16"><use href="#cube"/></svg></button><button class="on"><svg class="ic s16"><use href="#eyebox"/></svg></button><button><svg class="ic s16"><use href="#blocks"/></svg></button><button><svg class="ic s16"><use href="#dotslash"/></svg></button><button class="wide"><svg class="ic s16"><use href="#crop"/></svg><i class="chev"></i></button><button class="wide"><svg class="ic s14"><use href="#ghost"/></svg><i class="chev"></i></button><i class="sep"></i><button class="wide"><svg class="ic s18"><use href="#vset"/></svg><i class="chev"></i></button>
  </section>

  <div class="work">
    <aside class="palette">
      <div class="phead"><span class="pbtns wide3"><svg class="ic s10"><use href="#menu"/></svg><svg class="ic s10"><use href="#pin"/></svg><svg class="ic s8"><use href="#x"/></svg></span></div>
      <div class="pbody"><div class="tools" id="tools"></div><div class="vbar"><i class="up"></i><i class="thumb"></i><i class="track"></i><i class="down"></i></div></div>
    </aside>
    <aside class="side">
      <div class="phead"><h2>Tools</h2><span class="pbtns"><svg class="ic s10"><use href="#menu"/></svg><svg class="ic s10"><use href="#pin"/></svg><svg class="ic s8"><use href="#x"/></svg></span></div>
      <div class="spot" id="spot"></div>
      <div class="sets" id="sets"></div>
      <div class="phead att"><h2>Attribute</h2><span class="pbtns"><svg class="ic s10"><use href="#menu"/></svg><b>?</b><svg class="ic s10"><use href="#pin"/></svg><svg class="ic s8"><use href="#x"/></svg></span></div>
      <div class="attrs">
        <h3>Füllung</h3>
        <button class="abox"><i class="sw"></i><svg class="ic s14"><use href="#glasssm"/></svg><span>Solid</span><i class="tri"></i></button>
        <div class="abox lite"></div>
        <div class="arow"><span class="opac">100%</span><button class="dots" aria-label="Mehr">⋮</button></div>
        <h3>Stift</h3>
        <button class="abox"><i class="sw"></i><span>Solid</span><i class="tri"></i></button>
        <div class="abox blk"></div>
        <div class="arow"><span class="opac">100%</span><button class="dots" aria-label="Mehr">⋮</button></div>
        <button class="abox"><i class="rule"></i>0,35<i class="tri"></i></button>
        <div class="abox"><i class="rule"></i><i class="tri"></i><span class="link"><svg class="ic s14"><use href="#unlink"/></svg></span><i class="rule"></i><i class="tri"></i></div>
        <h3>Effekte</h3>
        <div class="arow fx"><label><input type="checkbox">Schatten</label><i class="hr"></i><button class="fxb" aria-label="Effekt"><svg class="ic s14"><use href="#redo"/></svg></button><button class="dots" aria-label="Mehr">⋮</button></div>
      </div>
    </aside>

    <section class="docs">
      <div class="tabs"><span class="tab">Awards_Show_Sample_editR...<svg class="ic s8"><use href="#x"/></svg></span><button class="add" aria-label="Neu"><svg class="ic s10"><use href="#plusthin"/></svg></button><button class="more" aria-label="Dokumente"><i class="tri"></i></button></div>
      <div class="view"><svg id="canvas" class="canvas" viewBox="276 204 1065 660" preserveAspectRatio="xMinYMin slice"></svg><div class="vbar doc"><i class="up"></i><i class="track"></i><i class="thumb"></i></div></div>
      <div class="hbar"><i class="lt"></i><i class="track"></i><i class="thumb"></i></div>
      <div class="status"></div>
    </section>

    <aside class="info">
      <div class="phead"><h2>Informationen - Objekt</h2><span class="pbtns"><svg class="ic s10"><use href="#menu"/></svg><b>?</b><svg class="ic s10"><use href="#pin"/></svg><svg class="ic s8"><use href="#x"/></svg></span></div>
      <div class="itabs"><button class="cur"><svg class="ic s16"><use href="#obj"/></svg>Objekt</button><button class="dt"><svg class="ic s18"><use href="#data"/></svg>Daten</button><button><svg class="ic s20"><use href="#pot"/></svg>Rendern</button></div>
      <h3 class="none">Nichts aktiv</h3>
      <p class="msg">Mit dem eingestellten Filter sind keine Elemente verfügbar.</p>
      <div class="name"><label for="nm">Name:</label><input id="nm" type="text"></div>
      <div class="phead nav"><h2>Navigation - Konstruktionsebenen</h2><span class="pbtns"><svg class="ic s10"><use href="#menu"/></svg><b>?</b><svg class="ic s10"><use href="#pin"/></svg><svg class="ic s8"><use href="#x"/></svg></span></div>
      <div class="navtabs"><button><svg class="ic s18"><use href="#classes"/></svg></button><button class="cur"><svg class="ic s18"><use href="#layers"/></svg></button><button><svg class="ic s20"><use href="#n3"/></svg></button><button><svg class="ic s20"><use href="#n4"/></svg></button><button><svg class="ic s20"><use href="#n5"/></svg></button><button><svg class="ic s20"><use href="#n6"/></svg></button></div>
      <div class="navbody">
        <label class="sel"><select aria-label="Filter"><option></option></select></label>
        <label class="sel"><select aria-label="Sichtbarkeit"><option></option></select></label>
        <div class="nsearch"><svg class="ic s14 blue2"><use href="#find"/></svg></div>
        <div class="nhead"></div><div class="nrow"></div><div class="nlist"></div>
        <div class="hbar"><i class="track"></i><i class="rt"></i></div>
      </div>
    </aside>
  </div>

  <section class="dialog" role="dialog" aria-label="Datenvisualisierung anlegen">
    <div class="dtitle"><span>Datenvisualisierung anlegen</span><b>?</b><svg class="ic s8"><use href="#x"/></svg></div>
    <div class="dbody">
      <div class="drow"><label for="dn">Datenvisualisierung:</label><input id="dn" type="text" value="Universen"></div>
      <div class="radios"><label><input type="radio" name="m" checked>Attribute ändern</label><label><input type="radio" name="m">Objekte ausblenden</label></div>
      <div class="frow"><button class="dbtn">Filter bearbeiten...</button><span>Gefundene Objekte: 66204</span></div>
      <div class="drow top"><label for="ow">Objekte wählen:</label><textarea id="ow">(ALL &amp; (INOBJECT &amp; (INSYMBOL &amp; (INGROUP))))</textarea><div class="vbar mini"><i class="up"></i><i class="track"></i><i class="down"></i></div></div>
      <fieldset>
        <legend>Objektdarstellung</legend>
        <div class="combos">
          <label class="sel"><select aria-label="Objekte"><option>Objekte mit Objekteinstellung</option></select></label>
          <div><label class="sel"><select aria-label="Objekttyp"><option>Scheinwerfer</option></select></label><label class="sel"><select aria-label="Feld"><option>Universe</option></select></label></div>
        </div>
        <div class="radios r2"><label><input type="radio" name="w" checked>Durch Attributwerte</label><label><input type="radio" name="w">Durch Attributbereiche</label></div>
        <div class="trow">
          <div class="tbl"><table><thead><tr><th class="c1">Wert</th><th class="c2">Zuweisen</th><th class="c3">Füllung</th><th class="c3">Stift</th><th class="c4">Linie</th><th class="c4">Dicke</th><th class="c4">Textur</th><th></th></tr></thead><tbody id="rows"></tbody></table><div class="vbar mini2"><i class="up"></i><i class="track"></i><i class="thumb"></i></div></div>
          <div class="dbtns"><button class="dbtn">Neu...</button><button class="dbtn on">Bearbeiten...</button><button class="dbtn">Löschen</button><button class="dbtn">Auto-Farbe</button><button class="dbtn">Farben bearbeiten...</button><button class="dbtn">Farbpalette anlegen...</button><button class="dbtn" aria-label="Weitere"></button></div>
        </div>
      </fieldset>
    </div>
    <i class="ring ring-b"></i>
  </section>
</div>
</main>
<footer class="band"></footer>
<script src="app.js"></script>
</body>
</html>
```
FILE: styles.css
```css
*{box-sizing:border-box}
html,body{height:100%}
body{margin:0;display:flex;flex-direction:column;font:10px/12px "Open Sans","Noto Sans",sans-serif;color:#444;background:#143a66;overflow:hidden}
h2,h3,p,ul{margin:0;padding:0;font-weight:400;font-size:10px}
button,input,select,textarea{font:inherit;color:inherit;margin:0;padding:0;border:0;background:none;border-radius:0;min-width:0}
select{appearance:none;width:100%;height:100%;outline:0}
.defs{position:absolute;width:0;height:0}
.ic{fill:none;stroke:currentColor;stroke-width:1.5;width:16px;height:16px;flex:none;display:block;overflow:visible}
.s8{width:8px;height:8px}.s10{width:10px;height:10px}.s14{width:14px;height:14px}.s16{width:16px;height:16px}.s18{width:18px;height:18px}.s20{width:20px;height:20px}.s22{width:22px;height:22px}.w28{width:28px;height:22px}
.blue2{color:#2a72ad;stroke-width:2}

.stage{flex:1;min-height:0;display:flex;padding:40px 74px 0 75px;overflow:hidden;
 background:
  radial-gradient(ellipse 80px 260px at 0 26%,#0b2646 40%,transparent),
  radial-gradient(ellipse 110px 420px at 100% 36%,#0f2c50 40%,transparent),
  linear-gradient(115deg,transparent 678px,#0e2a4c 680px,#0e2a4c 950px,transparent 1040px),
  linear-gradient(90deg,#12365f,#153a68 30%,#123259 70%,#14365f)}
.band{height:57px;background:#2bbfbf;border-top:1px solid #55d3d3}
.window{position:relative;flex:1;display:flex;flex-direction:column;background:#c9c9c9;border-radius:6px 6px 0 0;box-shadow:0 0 24px 6px rgba(3,14,32,.65);min-width:0}

.titlebar{display:flex;align-items:center;height:19px;color:#b2b2b2;background:#cbcbcb;border-radius:6px 6px 0 0;border-top:1px solid #dcdcdc}
.titlebar .title{margin-left:5px}
.titlebar .s16{color:#222}
.winbtns{margin-left:auto;display:flex;gap:33px;padding-right:16px;color:#aaa}
.winbtns .s10{stroke-width:2}
.menubar{display:flex;align-items:center;height:26px;padding-left:7px;gap:15px;background:#cbcbcb}
.menuicons{margin-left:auto;display:flex;align-items:center;gap:15px;padding-right:76px;color:#333}
.menuicons .opt{display:flex;align-items:center;gap:10px;margin-left:3px}
.menuicons .acct{border-left:1px solid #bdbdbd;padding-left:11px;margin-left:-11px}
.menuicons .opt .ic{margin-left:1px}
.caret{border:3px solid transparent;border-top:3px solid #555;border-bottom:0}
.chev{display:block;flex:none;width:5px;height:5px;border:solid #444;border-width:0 1px 1px 0;transform:rotate(45deg)}
.chev.in{display:inline-block;margin:0 0 3px 3px}

.ribbon{display:grid;grid-template-columns:417fr 167fr 147fr 68fr 227fr 292fr 70fr 52fr 91fr;height:68px;background:#d3d3d3;border-bottom:1px solid #c6c6c6}
.grp{border-right:1px solid #bcbcbc;margin-bottom:4px;display:grid;padding-top:5px;align-items:start;min-width:0}
.grp:last-child{border:0}
.g1{grid-template-columns:59fr 58fr 68fr 78fr 36fr 106fr;padding-left:6px;padding-right:6px}
.planes{padding-left:4px}
.g2{grid-template-columns:34fr 120fr;padding-left:8px;padding-right:4px}
.g3{grid-template-columns:28fr 107fr;padding-left:7px;padding-right:4px;gap:1px}
.g4{padding-left:8px;padding-right:6px}
.g5{display:flex;flex-direction:column;gap:3px;padding-left:11px}
.g6{grid-template-columns:144fr 68fr 72fr;padding-left:7px;padding-right:4px}
.g7{padding-left:5px;padding-right:6px}
.g9{padding-left:12px}
.big{display:flex;flex-direction:column;align-items:center;line-height:11px;text-align:center;padding-top:3px;white-space:nowrap}
.big span{margin-top:6px}
.big .ic{color:#222}.big .s18{margin:2px}
.big .chev{margin-top:1px}.big .chev.in{margin-top:0}
.off,.big.off .ic{color:#a0a0a0}
.rows{display:flex;flex-direction:column;gap:3px;min-width:0}
.pick{display:flex;align-items:center;height:21px;gap:4px;color:#222}
.planes .pick{margin-left:2px}
.pick.blue{color:#5a6fc0}
.pick.mid{justify-content:center}
.pick.gap{justify-content:space-between;padding:0 7px 0 0}
.g2 .pick.gap:first-child{padding-left:2px}
.on{background:#b2b2b2;color:#3f86bd}
.sel{position:relative;display:block;height:21px;border:1px solid #bdbdbd;background:#dadada;color:#333;min-width:0}
.sel select{padding-left:3px}
.sel::after{content:"";position:absolute;right:4px;top:50%;margin-top:-1px;border:3px solid transparent;border-top:3px solid #666;border-bottom:0}
.sel.chevd::after{border:solid #444;border-width:0 1px 1px 0;width:5px;height:5px;margin-top:-4px;transform:rotate(45deg)}
.sel.dis{background:#cfcfcf;color:#888}.sel.dis select{opacity:1;color:#888}
.sel.soft{color:#666}
.anchor{position:relative}
.sel.open{border-color:#8a8a8a;color:#222}
.sel.open select{padding-right:11px;padding-left:2px}
.sel.open::before{content:"";position:absolute;right:0;top:0;bottom:0;width:11px;background:#adadad}
.sel.open::after{right:2px}
.deg{height:21px;border:1px solid #bdbdbd;background:#d8d8d8;padding-left:2px;color:#555;width:100%}
.line{display:flex;align-items:center;height:21px}
.aa{font-size:15px;font-weight:600;color:#222;width:23px}
.g5 .chev{margin-right:5px}
.font{width:101px}.size{width:57px;border-left:0}
.fmt{gap:1px;margin-left:-6px}
.fmt button{width:30px;height:22px;display:flex;align-items:center;justify-content:center;color:#222}
.fmt .on{color:#3f86bd}
.fmt .b{font:700 15px "Liberation Mono",monospace}.fmt .i{font:italic 700 15px "Liberation Mono",monospace}.fmt .u{font:700 14px "Liberation Mono",monospace;text-decoration:underline}
.snaps{display:grid;grid-template-columns:repeat(5,28px);gap:1px;margin-top:-1px}
.snaps button{height:23px;display:flex;align-items:center;justify-content:center;position:relative;color:#222}
.snaps .ic{stroke-width:1.3}
.snaps .on{color:#3f86bd}.snaps .off{color:#9a9a9a}
.snaps .c::after{content:"";position:absolute;right:2px;bottom:2px;border:3px solid;border-color:transparent #3f86bd #3f86bd transparent}
.two{display:flex;justify-content:space-around;color:#333}

.modebar{display:flex;align-items:center;gap:1px;height:27px;background:#d3d3d3;padding:0 1px}
.modebar button{width:30px;height:23px;display:flex;align-items:center;justify-content:center;color:#222}
.modebar button.off{color:#a0a0a0;width:32px}
.modebar button.on{color:#222}
.modebar .push~button.on{color:#3f86bd}
.modebar .wide{width:36px;gap:5px}
.auto{display:flex;align-items:center;height:22px;width:121px;border:1px solid #acacac;color:#999;gap:6px;padding-left:6px}
.auto input,.sub input,.fx input{appearance:none;width:15px;height:15px;border:1px solid #b5b5b5;display:block;flex:none}
.sep{width:1px;height:18px;background:#c0c0c0;margin:0 1px}
.push{flex:1}

.work{flex:1;min-height:0;display:grid;grid-template-columns:57px 143px minmax(0,1fr) 248px}
.phead{display:flex;align-items:center;justify-content:space-between;height:22px;flex:none;padding:0 6px 0 3px;color:#444}
.pbtns{display:flex;align-items:center;gap:7px}
.pbtns b{font:600 12px "Open Sans",sans-serif;width:9px;text-align:center}
.wide3{padding-left:3px}
.palette,.side,.info,.docs{display:flex;flex-direction:column;min-width:0;min-height:0}
.palette{border-right:2px solid #c2c2c2}
.pbody{flex:1;display:flex;min-height:0;background:#d6d6d6;margin-bottom:8px}
.tools{width:38px;display:flex;flex-direction:column}
.tools button{flex:1;width:28px;margin-left:1px;display:flex;align-items:center;justify-content:center;position:relative;padding:0 6px 0 0;color:#222;min-height:0}
.tools button:first-child{background:#b4b4b4}
.tools .c::after{content:"";position:absolute;right:0;bottom:0;border:2px solid;border-color:transparent #222 #222 transparent}
.tools .ic,.spot .ic,.sets .ic{stroke-width:1.3}
.vbar{width:15px;display:flex;flex-direction:column;background:#c7c7c7;flex:none}
.palette .vbar{margin-left:auto;margin-right:2px}
.vbar .up,.vbar .down,.hbar .lt,.hbar .rt{height:16px;flex:none;border:1px solid #b4b4b4;background:#dadada;display:flex;align-items:center;justify-content:center}
.vbar i::before,.hbar i::before{content:"";border:4px solid transparent}
.vbar .thumb::before,.vbar .track::before,.hbar .thumb::before,.hbar .track::before{display:none}
.vbar .up::before{border-bottom:4px solid #666;border-top:0}
.vbar .down::before{border-top:4px solid #666;border-bottom:0}
.hbar .lt::before{border-right:4px solid #555;border-left:0}
.hbar .rt::before{border-left:4px solid #555;border-right:0}
.vbar .thumb,.hbar .thumb{background:#dadada;border:1px solid #b8b8b8}
.palette .thumb{flex:436}.palette .track{flex:211}
.doc .track{flex:275}.doc .thumb{flex:369;border-bottom:0}

.spot{display:grid;grid-template-columns:repeat(4,31px);grid-auto-rows:25px;height:228px;background:#d9d9d9;color:#333;align-items:center;justify-items:center;flex:none}
.sets{display:grid;grid-template-columns:repeat(4,31px);grid-auto-rows:25px;height:104px;background:#c9c9c9;border-bottom:3px solid #b7b7b7;color:#333;flex:none}
.spot button,.sets button{width:28px;height:22px;display:flex;align-items:center;justify-content:center}
.sets button{margin:1px}
.sets button:nth-child(4){background:#b8b8b8}
.att{height:21px}
.attrs{flex:1;background:#d3d3d3;padding:6px 1px 0 1px;font-family:"Liberation Sans",Arial,sans-serif;display:flex;flex-direction:column;gap:3px}
.attrs h3{display:flex;align-items:center;gap:4px;height:13px;margin:0 0 2px}
.attrs h3:nth-of-type(n+2){margin-top:4px}
.attrs h3::after,.hr{content:"";flex:1;height:1px;background:#bcbcbc}
.abox{height:23px;border:1px solid #b2b2b2;background:#d3d3d3;display:flex;align-items:center;padding:0 5px 0 10px;gap:9px;width:100%;flex:none}
.abox.lite{background:#dadada}.abox.blk{background:#000;border:1px solid #d3d3d3;outline:1px solid #999;outline-offset:-1px}
.abox span{flex:1;text-align:center}
.sw{width:13px;height:13px;background:#2c2c2c}
.tri{border:4px solid transparent;border-top:4px solid #777;border-bottom:0;flex:none}
.rule{flex:1;height:1px;background:#333}
.abox:has(.rule){padding-left:2px;gap:5px}
.abox .link{flex:none;border:1px solid #aaa;border-width:0 1px;height:21px;display:flex;align-items:center;color:#222}
.arow{display:flex;height:23px;gap:2px;flex:none;color:#333}
.opac{flex:1;border:1px solid #bbb;color:#eee;font:700 10px/21px "Open Sans",sans-serif;text-align:right;padding-right:5px;background:linear-gradient(90deg,transparent 4px,#000 17px),repeating-conic-gradient(#aaa 0 25%,#d6d6d6 0 50%) 0 0/4px 4px}
.dots{width:17px;border:1px solid #b2b2b2;font:700 14px "Open Sans",sans-serif;text-align:center}
.fx{align-items:center;margin-top:-1px}.fx .hr{margin:0 1px 0 8px}.fx label{display:flex;align-items:center;gap:3px;color:#555}.fx input{width:11px;height:11px}
.fxb{width:26px;height:21px;background:#000;display:flex;align-items:center;justify-content:center;color:#eee}.fx .dots{height:22px}

.docs{border-left:1px solid #b9b9b9}
.tabs{display:flex;align-items:center;height:24px;flex:none}
.tab{display:flex;align-items:center;gap:8px;height:24px;width:180px;background:#d3d3d3;padding:0 8px 0 7px;font-weight:600;color:#333;justify-content:space-between;white-space:nowrap}
.add{padding-left:5px;color:#222}
.more{margin-left:auto;margin-right:5px;width:13px;height:13px;border:1px solid #999;background:#ddd;display:flex;align-items:center;justify-content:center}
.more .tri{border-width:3px 3px 0;border-top-color:#222}
.view{flex:1;min-height:0;display:flex;padding-right:2px}
.canvas{flex:1;min-width:0;height:100%;display:block;background:#dadada;overflow:hidden}
.hbar{display:flex;height:16px;background:#c7c7c7;flex:none}
.hbar .lt,.hbar .rt{width:16px}
.docs .hbar .track{flex:398}.docs .hbar .thumb{flex:666}
.status{height:8px;background:#cfcfcf;flex:none}

.info{border-left:2px solid #bdbdbd;background:#d3d3d3}
.info .phead{background:#c9c9c9}
.itabs{display:flex;height:26px;background:#c9c9c9;flex:none}
.itabs button{display:flex;align-items:center;gap:6px;padding:2px 5px 0 7px;color:#555}
.itabs .ic{color:#222}
.itabs .cur{background:#d3d3d3}
.itabs .dt{border-right:1px solid #b4b4b4;margin:4px 0;padding:2px 3px 0 6px}
.none{font-weight:700;color:#222;padding:6px 3px 0;height:24px;border-bottom:1px solid #c4c4c4}
.msg{font:10px/12px Roboto,sans-serif;text-align:center;padding:52px 12px 0;flex:0 0 259px}
.name{display:flex;align-items:center;height:18px;gap:3px;padding-left:2px;font-family:"Liberation Sans",sans-serif;color:#999}
.name input{flex:1;height:18px;border:1px solid #aaa}
.info .nav{height:25px;border-top:3px solid #b7b7b7;margin-top:1px}
.navtabs{display:flex;height:25px;background:#c9c9c9;flex:none;gap:1px;padding-left:2px}
.navtabs button{width:33px;display:flex;justify-content:center;padding-top:3px;color:#222}
.navtabs .cur{background:#d3d3d3}
.navbody{flex:1;display:flex;flex-direction:column;padding-top:7px;gap:4px;padding-right:2px}
.nsearch{height:19px;background:#dadada;display:flex;justify-content:flex-end;align-items:center}
.nhead{height:18px;background:#c9c9c9;margin-top:3px}.nrow{height:16px;background:#b2b2b2;margin-top:-4px}.nlist{flex:1;background:#d9d9d9;margin:-4px 0}
.navbody .hbar{margin-bottom:8px}.navbody .track{flex:1}

.popup{position:absolute;z-index:5;left:0;top:100%;width:306px;height:344px;background:#d0d0d0;border:1px solid #a9a9a9;box-shadow:2px 3px 5px rgba(0,0,0,.45);font:10px/12px Roboto,sans-serif;color:#444;padding:5px 4px 0;display:flex;flex-direction:column}
.pitem{display:flex;align-items:center;gap:7px;height:22px;padding-left:7px;width:100%}
.pitem .ic{width:18px}
.pitem.off{color:#aaa}
.psearch{display:flex;align-items:center;height:22px;border:1px solid #999;background:#dadada;margin-top:2px;padding-right:3px;flex:none}
.psearch input{flex:1;height:18px;padding-left:2px;border-left:1px solid #222;outline:0}
.psearch input::placeholder{color:#777}
.tree{list-style:none;margin-top:4px;border:1px solid #bbb;background:#dadada;height:224px}
.tree li{display:flex;align-items:center;height:18px;gap:6px}
.tree .ic{color:#111}
.tree .chev,.nochev{width:6px;margin:0 9px 0 9px}
.tree .chev{height:6px}
.tree .chev.rt{transform:rotate(-45deg);border-color:#666}
.tree .sub{padding-left:54px}
.tree label{display:flex;align-items:center;gap:6px}
.tree label .ic{margin-right:5px}
.sub input{width:17px;height:17px}
.sub input:checked{position:relative}
.sub input:checked::after{content:"";position:absolute;left:5px;top:3px;width:3px;height:6px;border:solid #444;border-width:0 1px 1px 0;transform:rotate(40deg)}
.grip{margin:10px 1px 0 auto;width:6px;height:6px;background:linear-gradient(#222,#222) 4px 0/2px 2px no-repeat,linear-gradient(#222,#222) 0 4px/2px 2px no-repeat,linear-gradient(#222,#222) 4px 4px/2px 2px no-repeat}
.ring{position:absolute;z-index:9;border-radius:50%;border:9px solid rgba(61,127,66,.88);pointer-events:none}
.ring-a{width:62px;height:62px;left:70px;top:-21px}
.ring-b{width:46px;height:46px;border-width:7px;right:73px;top:300px}

.dialog{position:absolute;z-index:4;left:725px;right:48px;top:528px;bottom:0;background:#d0d0d0;border-radius:6px 6px 0 0;box-shadow:0 0 14px 2px rgba(0,0,0,.7);font:7px/9px Inter,sans-serif;color:#444;display:flex;flex-direction:column;overflow:hidden}
.dtitle{display:flex;align-items:center;height:16px;background:#c6c6c6;padding:0 9px 0 5px;color:#222;flex:none}
.dtitle span{flex:1}.dtitle b{margin-right:25px;font-weight:400;font-size:8px}
.dtitle .ic{width:7px;color:#666}
.dbody{padding:5px 9px 0 10px;flex:1;min-height:0}
.drow{display:flex;align-items:center;height:13px}
.drow label{width:67px;flex:none}
.drow input{flex:1;height:13px;border:1px solid #c6c6c6;background:#d8d8d8;padding-left:1px}
.radios{display:flex;gap:13px;margin-top:6px;height:11px;align-items:center}
.radios label{display:flex;align-items:center;gap:2px}
input[type=radio]{appearance:none;width:8px;height:8px;border:1px solid #aaa;border-radius:50%;background:#d8d8d8}
input[type=radio]:checked{background:radial-gradient(#222 28%,#d8d8d8 36%)}
.frow{display:flex;align-items:center;gap:10px;margin-top:3px}
.dbtn{height:16px;border:1px solid #aaa;background:#d5d5d5;flex:none;color:#444}
.dbtn.on{background:#b6b6b6;color:#444}
.frow .dbtn{width:73px}
.drow.top{height:35px;margin-top:4px;align-items:flex-start}
.drow.top label{padding-top:2px}
.drow textarea{flex:1;height:35px;resize:none;border:1px solid #c6c6c6;border-right:0;padding:1px;overflow:hidden}
.vbar.mini{width:12px;height:35px}
.mini .track{flex:1}.mini .up,.mini .down{height:12px;border-color:#ccc}
.mini .up::before,.mini .down::before,.mini2 .up::before{border-left-width:3px;border-right-width:3px}
.mini .up::before{border-bottom-color:#999}.mini .down::before{border-top-color:#999}
fieldset{border:1px solid #c6c6c6;border-bottom:0;margin:8px 0 0;padding:1px 6px 0;min-width:0}
legend{padding:0 3px 0 2px;margin-left:-2px}
.combos{display:grid;grid-template-columns:325fr 332fr;gap:69px;align-items:start}
.combos div{display:flex;flex-direction:column;gap:5px}
.dialog .sel{height:15px;border-color:#c2c2c2;color:#444}
.dialog .sel select{padding-left:1px}
.dialog .sel::after{border-width:2px 2px 0}
.r2{margin-top:28px;gap:15px}
.trow{display:flex;gap:10px;margin-top:4px}
.tbl{flex:1;display:flex;min-width:0;padding-left:1px}
table{flex:1;border-collapse:collapse;table-layout:fixed;width:100%;height:119px;background:#dadada}
th{font-weight:400;text-align:left;background:#c9c9c9;height:16px;padding:0 0 0 4px;border-right:1px solid #d4d4d4}
.c1{width:119px}.c2{width:125px}.c3{width:40px}.c4{width:52px}
td{padding:0;background:#b6b6b6;height:11px;line-height:9px;vertical-align:middle}
td:first-child{padding-left:4px}
td:last-child{background:#dadada}
td.ck{text-align:center}
.ck i{display:inline-block;width:3px;height:7px;border:solid #111;border-width:0 1px 1px 0;transform:rotate(40deg)}
td.fill,td.pen{border:1px solid #c2c2c2}
td.pen{background:#000}
.ln i{display:block;width:15px;height:9px;margin:0 auto;background:linear-gradient(#333,#333) 0 50%/100% 1px no-repeat #dadada}
.dk i{display:inline-block;width:34px;height:1px;background:#333;vertical-align:middle;margin:0 2px 0 1px}
.mini2{width:12px;height:119px}
.mini2 .up{height:13px}.mini2 .track{height:9px}.mini2 .thumb{flex:1}
.dbtns{width:85px;display:flex;flex-direction:column;gap:3px;margin-top:-3px}
```
FILE: app.js
```js
const useIcon = (id, cls) => `<svg class="ic ${cls}"><use href="#${id}"/></svg>`;

const tools = 'arrow wand hand copysel orbit planepink zoomt* txt ln dln circ* sector* rect* polyg poly2* poly3 path squig cubed sx dash dropper arroweye reshape* clipt knife sciss*'.split(' ');
document.getElementById('tools').innerHTML = tools.map(t => {
  const id = t.replace('*', '');
  return `<button class="${t.endsWith('*') ? 'c' : ''}" aria-label="${id}">${useIcon(id, 's18')}</button>`;
}).join('');

const cells = (prefix, n) => Array.from({ length: n }, (_, i) =>
  `<button aria-label="${prefix}${i + 1}">${useIcon(prefix + (i + 1), 's20')}</button>`).join('');
document.getElementById('spot').innerHTML = cells('t', 14);
document.getElementById('sets').innerHTML = cells('s', 13);

const values = [['11', '#c9a8cf'], ['12', '#2aa6b3'], ['13', '#b83fb8'], ['14', '#2a2eb5'], ['15', '#b3ac2a'],
  ['2', '#229c25'], ['3', '#b53028'], ['4', '#a87424'], ['5', '#1a5f66']];
document.getElementById('rows').innerHTML = values.map(([v, c]) =>
  `<tr><td>${v}</td><td class="ck"><i></i></td><td class="fill" style="background:${c}"></td><td class="pen"></td><td class="ln"><i></i></td><td class="dk"><i></i>0,35</td><td></td><td></td></tr>`).join('');

// ---- drawing ----
const MAG = '#bb3fbb', PINK = '#d3a3d4', BLUE = '#a0a3da', TEAL = '#27a5b0';
const line = (x1, y1, x2, y2, c, w, extra = '') => `<line x1="${x1}" y1="${y1}" x2="${x2}" y2="${y2}" stroke="${c}" stroke-width="${w}" ${extra}/>`;
const poly = (pts, c, w) => `<polyline points="${pts}" fill="none" stroke="${c}" stroke-width="${w}"/>`;
const block = (x, y, w, h) => `<rect x="${x - w / 2}" y="${y - h / 2}" width="${w}" height="${h}" fill="#777"/>`;
const eight = (x, y, horizontal) => {
  const [dx, dy] = horizontal ? [2, 0] : [0, 2];
  return `<g fill="none" stroke="#333" stroke-width="1.1"><circle cx="${x - dx}" cy="${y - dy}" r="1.700"/><circle cx="${x + dx}" cy="${y + dy}" r="1.700"/></g>`;
};
const dot = (x, y, r) => `<circle cx="${x}" cy="${y}" r="${r}" fill="${MAG}"/><circle cx="${x}" cy="${y}" r="1" fill="#a03fa0"/>`;
const truss = (x1, y1, x2, y2) => line(x1, y1, x2, y2, BLUE, 8) + line(x1, y1, x2, y2, '#dcdcdc', 3.5, 'stroke-dasharray="9 3"');
const star = (x, y) => `<path d="M${x - 4} ${y - 6}l8 12M${x + 4} ${y - 6}l-8 12M${x - 6} ${y}h12" stroke="${BLUE}" stroke-width="1.300"/><rect x="${x - 1.5}" y="${y - 2}" width="3" height="4" fill="#777"/>`;
const bar = (x1, y1, x2, y2) => {
  const mx = (x1 + x2) / 2, my = (y1 + y2) / 2, a = Math.atan2(y2 - y1, x2 - x1) * 180 / Math.PI;
  return line(x1, y1, x2, y2, TEAL, 4) +
    `<g transform="translate(${mx} ${my}) rotate(${a})" stroke="#333" stroke-width=".9" fill="none"><circle cx="0" cy="-8.500" r="1.800"/><circle cx="0" cy="-5" r="1.800"/><path d="M0-2v3M-1.500 5h3M-1.500 8h3"/></g>`;
};

let half = '';
for (let i = 0; i < 7; i++) half += bar(293.500 + 44.500 * i, 503 - 22.200 * i, 330 + 44.500 * i, 485 - 22.200 * i);
half += line(276, 512, 286, 507, '#93cbd0', 4);
half += bar(636.500, 240.500, 678, 240.500) + line(681, 240.500, 720, 240.500, TEAL, 4);
half += line(574.500, 308.500, 662, 308.500, PINK, 3) + line(574.500, 330.500, 662, 330.500, PINK, 3);
for (let x = 582; x < 662; x += 6.300) half += line(x, 310, x, 330, PINK, 1.5);
half += poly('700,289 664.500,289 664.500,345 638,345', PINK, 1.5);
half += line(667.500, 294, 667.500, 347, '#d4ce98', 4) + line(675, 293, 700, 293, '#d4ce98', 5);
half += poly('700,346.500 639.500,346.500 639.500,377 606,377', '#d4ce98', 2.5);
half += poly('662,294 662,344 636.500,344 636.500,373 606.500,373 606.500,377', '#a9d0aa', 1.5);
for (const y of [279.5, 300.5, 321.5]) {
  half += `<rect x="657" y="${y - 3.500}" width="50" height="7" fill="none" stroke="${BLUE}" stroke-width="2"/>` + line(669, y - 3, 669, y + 3, BLUE, 2) + line(681, y - 3, 681, y + 3, BLUE, 2) + block(693, y, 12, 7);
  half += `<path d="M653 ${y - 3}l4 3-4 3" fill="none" stroke="${BLUE}"/>`;
}
half += line(675, 300, 700, 300, MAG, 3) + dot(685, 321.500, 5.5) + eight(685, 311.500);
for (const x of [606.5, 612.7, 619.2, 626, 632.7, 639.2]) half += line(x, 378, x, 404, PINK, 1.5);
half += ['609,412 617,448 652,462.500 652,506.500 834,506.500', '615.500,412 623,443 659,457.500 659,500 834,500',
  '621.500,412 628,438 665.500,453.500 665.500,493.500 834,493.500', '627,412 634,433.500 672,449.500 672,486.500 834,486.500',
  '633,412 638.500,428.500 679,445.500 679,480 834,480', '639,412 643.500,424 685,441 685,474 834,474'].map(p => poly(p, PINK, 1.8)).join('');
half += truss(586, 408, 834, 408) + block(625, 408, 6, 7) + block(691, 408, 8, 7);
half += `<path d="M582 405l4 3-4 3" fill="none" stroke="${BLUE}"/>`;
[[598, 5.5], [618, 5.5], [637.5, 8.5], [657, 5.5], [676.5, 8.5], [696, 5.5]].forEach(([x, r]) => { half += eight(x, 399) + dot(x, 408, r); });

let art = line(289, 526.5, 900, 526.5, '#dcbcb8', 1) + line(900, 526.5, 1341, 526.5, '#d39a98', 1.5) + line(840.5, 218, 840.5, 600, '#b9d3ba', 1);
art += `<g>${half}</g><g transform="translate(1668 0) scale(-1 1)">${half}</g>`;
art += `<g stroke="#7aa6c4" stroke-width="1.600" fill="none"><circle cx="839.5" cy="526.5" r="10.500"/><path d="M825 526.500h29M839.500 512v29"/></g>`;

// front truss
art += truss(586, 551, 1082, 551);
for (const x of [766, 834, 900, 970]) art += block(x, 551, 5, 7);
for (let i = 0; i < 22; i++) { const x = 599.3 + 22.34 * i; art += eight(x, 561) + dot(x, 551, 8.6); }
art += `<path d="M582 548l4 3-4 3M1086 548l-4 3 4 3" fill="none" stroke="${BLUE}"/>`;

// rectangular rig
for (const x of [308, 738.7]) art += truss(x, 608, x, 842);
for (const y of [611.8, 725.5, 838.7]) {
  art += truss(304, y, 742, y) + star(308, y) + star(738.7, y);
  for (const x of [417.5, 488, 558.5, 629.5]) art += block(x, y, 12, 6);
  for (let i = 0; i < 8; i++) {
    const x = 347.3 + 50.3 * i;
    if (i === 0 || i === 7) art += block(x, y, 11, 6);
    art += dot(x, y - 1, 4.9) + eight(x, y + 8);
  }
}
for (const y of [651, 703.5, 747, 800]) art += block(308, y, 7, 11) + dot(308, y, 4.9) + eight(299, y, true) + block(739, y, 7, 11) + dot(740, y, 4.9) + eight(748.5, y, true);

// view cube
art += `<rect x="312" y="784" width="46" height="45" fill="#b9cddc" stroke="#9bbdd2"/><path d="M312 784h14l-14 12zM358 784h-14l14 12zM312 829h11l-11-11zM358 829h-11l11-11z" fill="#8fb6cf"/>
<rect x="319" y="786" width="30" height="12" rx="6" fill="#dcdfe6"/><circle cx="326" cy="792" r="4.500" fill="#2428b5"/>
<rect x="303" y="801" width="64" height="12" fill="#dadae0"/><text x="334" y="795" font-size="8" fill="#33339c">2D</text><text x="304" y="809" font-size="7" fill="#33339c">2D-Plan Draufsicht</text>`;
art += line(309, 779, 309, 801, '#3f8a50', 2) + line(309, 813, 309, 832, '#3f8a50', 2) + line(309, 832, 362, 832, '#8d3535', 1.5) +
  '<text x="368" y="836" font-size="6" fill="#a44">x</text><text x="306" y="774" font-size="6" fill="#3f8a50">Y</text>';

// rulers
const R = '#333';
art += '<g font-family="Liberation Sans" font-size="8" fill="#333"><rect x="276" y="204" width="1065" height="14" fill="#dadada"/><rect x="276" y="218" width="13" height="646" fill="#dadada" fill-opacity=".5"/>';
art += line(289, 217.5, 1341, 217.5, R, 1) + line(289.5, 217, 289.5, 864, R, 1);
for (let i = -77; i <= 71; i++) {
  const x = 840 + i * 7.05;
  art += line(x, i % 10 === 0 ? 204 : i % 5 === 0 ? 213 : 215.5, x, 217, R, 1);
  if (i % 10 === 0) art += `<text x="${x + 2}" y="212">${Math.abs(i)}'-0"</text>`;
}
art += '<rect x="276" y="204" width="14" height="14" fill="#d4d4d4"/><text x="291" y="212">0"</text>';
for (let i = -43; i <= 47; i++) {
  const y = 526 + i * 7.07;
  art += line(i % 10 === 0 ? 276 : i % 5 === 0 ? 285 : 287.5, y, 289, y, R, 1);
  if (i % 10 === 0) art += `<text transform="translate(284 ${y - 2}) rotate(-90)">${i ? Math.abs(i) + "'-0" : 0}"</text>`;
}
art += '<text transform="translate(284 863) rotate(-90)">0"</text></g>';
art += '<g stroke="#222" fill="none"><circle cx="283" cy="211" r="4"/><path d="M283 204v3M283 215v3M276 211h3M287 211h3"/></g>';
document.getElementById('canvas').innerHTML = art;
```
